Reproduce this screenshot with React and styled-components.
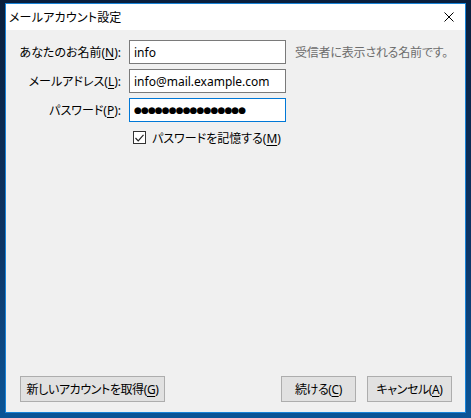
import React from 'react';
import styled, { createGlobalStyle } from 'styled-components';

const GlobalStyle = createGlobalStyle`
	html, body {
		margin: 0;
		height: 100%;
	}
	body {
		background: linear-gradient(180deg, #0a1f3c 0%, #0c3566 60%, #0b5597 100%);
		font-family: "Noto Sans", "Noto Sans CJK JP", sans-serif;
		font-size: 12px;
		font-feature-settings: "palt";
		color: #000;
	}
`;

const Desktop = styled.div`
	padding: 3px 5px 5px 5px;
`;

const Window = styled.div`
	width: 461px;
	height: 410px;
	box-sizing: border-box;
	border: 1px solid #1883d7;
	display: flex;
	flex-direction: column;
	background: #f0f0f0;
`;

const TitleBar = styled.div`
	height: 26px;
	flex-shrink: 0;
	background: #fff;
	display: flex;
	align-items: center;
	padding-left: 3px;
`;

const Title = styled.span`
	flex: 1;
	font-size: 12px;
	letter-spacing: 0.2px;
`;

const CloseButton = styled.div`
	width: 32px;
	height: 26px;
	display: flex;
	align-items: center;
	justify-content: center;
`;

const Body = styled.div`
	flex: 1;
	display: flex;
	flex-direction: column;
	padding: 10px 13px 10px 14px;
`;

const Form = styled.div`
	display: grid;
	grid-template-columns: 101px 157px 1fr;
	grid-auto-rows: 24px;
	column-gap: 8px;
	row-gap: 5px;
`;

const Label = styled.label`
	justify-self: end;
	align-self: center;
	white-space: nowrap;
`;

const Key = styled.span`
	text-decoration: underline;
	text-underline-offset: 2px;
`;

const Field = styled.input`
	box-sizing: border-box;
	width: 157px;
	height: 24px;
	margin: 0;
	padding: 0 4px;
	border: 1px solid ${({ focused }) => (focused ? '#0078d7' : '#7a7a7a')};
	background: #fff;
	font-family: "Noto Sans", "Noto Sans CJK JP", sans-serif;
	font-size: 12px;
	color: #000;
	outline: none;
`;

const DotField = styled(Field)`
	font-family: "DejaVu Sans", sans-serif;
	font-size: 9px;
	letter-spacing: -0.9px;
`;

const Hint = styled.span`
	align-self: center;
	margin-left: 1px;
	color: #6d6d6d;
	white-space: nowrap;
	letter-spacing: -0.2px;
`;

const CheckRow = styled.label`
	grid-column: 2 / span 2;
	align-self: start;
	height: 13px;
	margin-top: 4px;
	padding-left: 4px;
	display: flex;
	align-items: center;
	gap: 6px;
	white-space: nowrap;
`;

const CheckBox = styled.span`
	width: 13px;
	height: 13px;
	box-sizing: border-box;
	border: 1px solid #333;
	background: #fff;
	display: flex;
	align-items: center;
	justify-content: center;
`;

const Footer = styled.div`
	margin-top: auto;
	display: flex;
	justify-content: space-between;
	align-items: flex-end;
`;

const ButtonGroup = styled.div`
	display: flex;
	gap: 11px;
`;

const Button = styled.button`
	width: ${({ w }) => w}px;
	height: 26px;
	box-sizing: border-box;
	margin: 0;
	padding: 0;
	border: 1px solid #adadad;
	background: #e1e1e1;
	font-family: "Noto Sans", "Noto Sans CJK JP", sans-serif;
	font-size: 12px;
	font-feature-settings: "palt";
	letter-spacing: -0.4px;
	color: #000;
	white-space: nowrap;
`;

export default function App() {
	return (
		<>
			<GlobalStyle />
			<Desktop>
				<Window>
					<TitleBar>
						<Title>メールアカウント設定</Title>
						<CloseButton>
							<svg width="10" height="10" viewBox="0 0 10 10">
								<path d="M0.5 0.5 L9.5 9.5 M9.5 0.5 L0.5 9.5" stroke="#000" strokeWidth="1" />
							</svg>
						</CloseButton>
					</TitleBar>
					<Body>
						<Form>
							<Label>あなたのお名前(<Key>N</Key>):</Label>
							<Field defaultValue="info" />
							<Hint>受信者に表示される名前です。</Hint>

							<Label>メールアドレス(<Key>L</Key>):</Label>
							<Field defaultValue="info@mail.example.com" />
							<span />

							<Label>パスワード(<Key>P</Key>):</Label>
							<DotField focused readOnly value={'●'.repeat(16)} />
							<span />

							<CheckRow>
								<CheckBox>
									<svg width="9" height="8" viewBox="0 0 9 8">
										<path d="M0.5 4 L3.2 6.8 L8.5 0.8" fill="none" stroke="#222" strokeWidth="1.2" />
									</svg>
								</CheckBox>
								<span>パスワードを記憶する(<Key>M</Key>)</span>
							</CheckRow>
						</Form>
						<Footer>
							<Button w={145}>新しいアカウントを取得(<Key>G</Key>)</Button>
							<ButtonGroup>
								<Button w={75}>続ける(<Key>C</Key>)</Button>
								<Button w={85}>キャンセル(<Key>A</Key>)</Button>
							</ButtonGroup>
						</Footer>
					</Body>
				</Window>
			</Desktop>
		</>
	);
}
